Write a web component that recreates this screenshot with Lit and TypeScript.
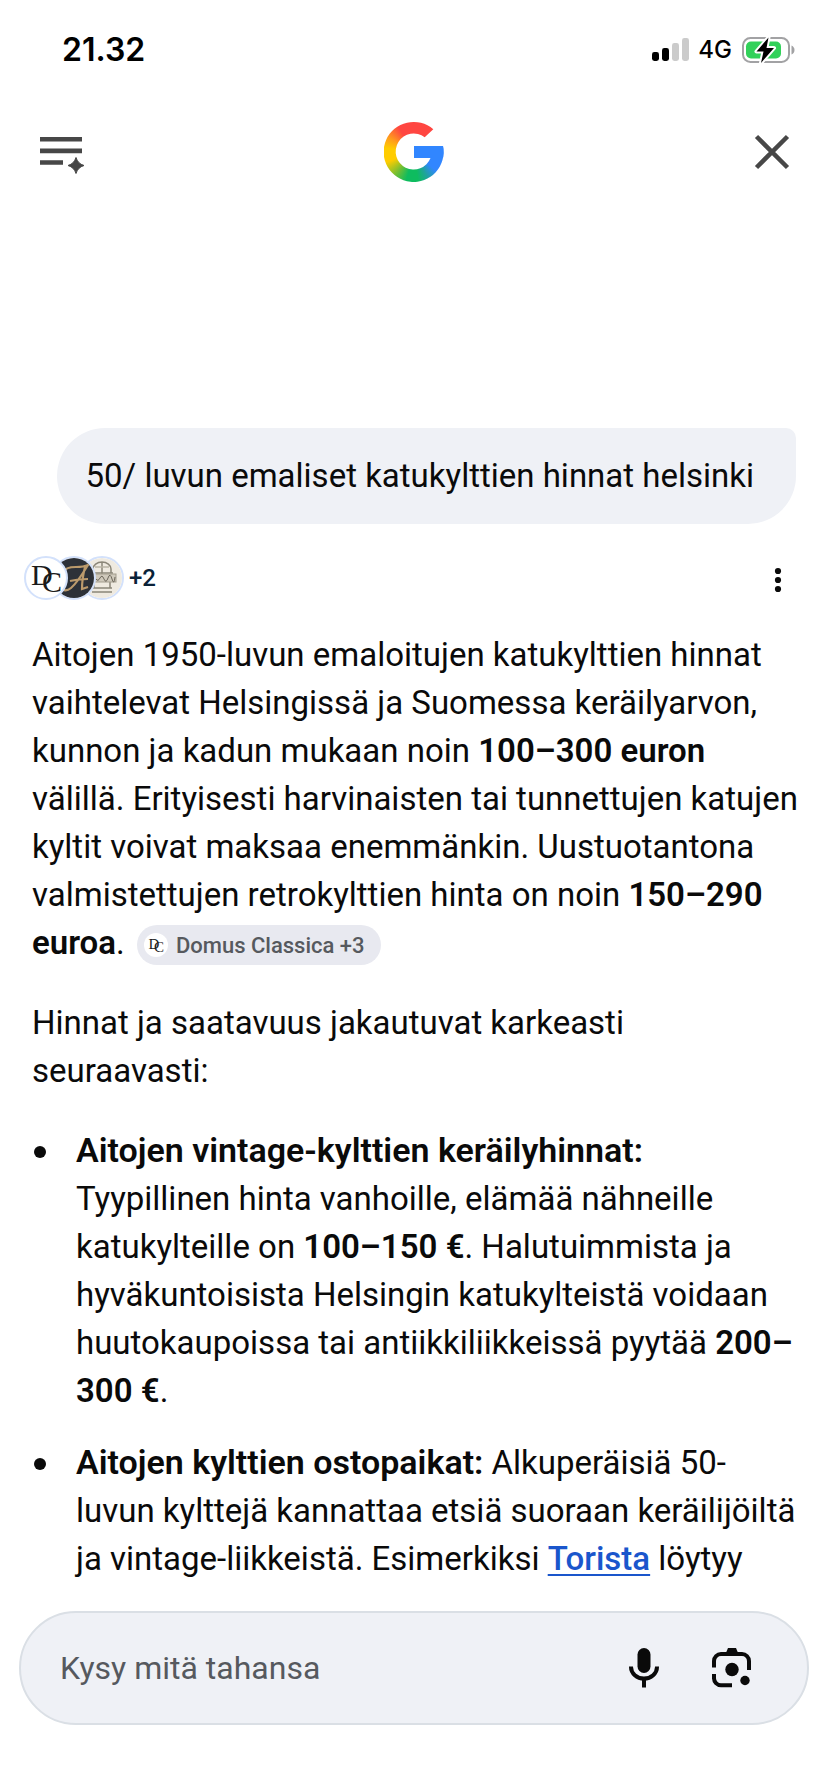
import { LitElement, html, svg, css } from "lit";
import { customElement } from "lit/decorators.js";

const monogram = svg`
  <text x="5" y="27" font-size="30">D</text>
  <text x="16" y="34" font-size="30">C</text>`;

@customElement("status-bar")
class StatusBar extends LitElement {
  static styles = css`
    :host { display: flex; align-items: center; justify-content: space-between; height: 100px; padding: 0 33px 0 62px; font-family: Inter, "Liberation Sans", sans-serif; color: #000; }
    .time { font-size: 32px; font-weight: 600; }
    .right { display: flex; align-items: center; gap: 9px; }
    .net { font-size: 24px; font-weight: 500; }
    svg { display: block; }
  `;
  render() {
    return html`
      <span class="time">21.32</span>
      <span class="right">
        <svg width="37" height="24" viewBox="0 0 37 24" aria-hidden="true">
          <rect x="0" y="14" width="7" height="9" rx="2.4" />
          <rect x="10" y="10" width="7" height="13" rx="2.4" />
          <rect x="20" y="5" width="7" height="18" rx="2.4" fill="#cbcbcb" />
          <rect x="30" y="0" width="7" height="23" rx="2.4" fill="#cbcbcb" />
        </svg>
        <span class="net">4G</span>
        <svg width="54" height="28" viewBox="0 0 54 28" aria-hidden="true">
          <rect x="2" y="2" width="46" height="24" rx="7.5" fill="none" stroke="#a2a2a4" stroke-width="2" />
          <rect x="5" y="5.500" width="35" height="17" rx="5" fill="#32d15a" />
          <path d="M50.500 9.500 Q53.500 11 53.500 14 Q53.500 17 50.500 18.500Z" fill="#a2a2a4" />
          <path d="M27.500 1.500 L15.500 15.500 H22.500 L20 27 L33 12 H25.500Z" stroke="#fff" stroke-width="4" stroke-linejoin="round" />
          <path d="M27.500 1.500 L15.500 15.500 H22.500 L20 27 L33 12 H25.500Z" />
        </svg>
      </span>`;
  }
}

@customElement("app-header")
class AppHeader extends LitElement {
  static styles = css`
    :host { display: grid; grid-template-columns: 1fr auto 1fr; align-items: center; height: 104px; padding: 0 28px; color: #474747; }
    button { display: grid; place-items: center; width: 64px; height: 56px; padding: 0; border: 0; background: none; color: inherit; cursor: pointer; }
    .close { justify-self: end; width: 56px; }
    .logo {
      width: 60px; height: 60px;
      background:
        linear-gradient(#3186ff, #3186ff) 30px 24px / 30px 12px no-repeat,
        conic-gradient(#ff4641 0deg 45deg, #3186ff 70deg 130deg, #1fa39c 152deg, #0ebc5f 172deg 195deg, #6dbe35 218deg, #ffcc00 250deg 278deg, #ff9b1d 300deg, #ff4641 328deg 360deg);
      clip-path: path("M49.300 7.300 A30 30 0 1 0 59 24 L30 24 L30 36 L46.500 36 A18 18 0 1 1 40.700 15.300 Z");
    }
  `;
  render() {
    return html`
      <button aria-label="Keskustelut">
        <svg width="44" height="40" viewBox="0 0 44 40" fill="currentColor" overflow="visible">
          <path d="M2 5h42v4.600H2zM2 16.600h42v4.600H2zM2 28.200h23v4.600H2z" />
          <path d="M38 25.500 Q39.800 31.700 46 33.500 Q39.800 35.300 38 41.500 Q36.200 35.300 30 33.500 Q36.200 31.700 38 25.500Z" stroke="currentColor" />
        </svg>
      </button>
      <div class="logo" role="img" aria-label="Google"></div>
      <button class="close" aria-label="Sulje">
        <svg width="40" height="40" viewBox="0 0 40 40" fill="none" stroke="currentColor" stroke-width="4.500">
          <path d="M4.500 4.500 35.500 35.500M35.500 4.500 4.500 35.500" />
        </svg>
      </button>`;
  }
}

@customElement("source-row")
class SourceRow extends LitElement {
  static styles = css`
    :host { display: flex; align-items: center; justify-content: space-between; height: 44px; padding: 0 24px; }
    button { display: flex; align-items: center; padding: 0; border: 0; background: none; cursor: pointer; color: #0a2238; font: 500 24px Roboto, sans-serif; }
    .more { justify-content: center; width: 52px; height: 44px; color: #0a0a0a; }
    .stack { display: flex; flex-direction: row-reverse; margin-right: 5px; }
    .pic { box-sizing: border-box; width: 44px; height: 44px; border: 2px solid #d3e1fb; border-radius: 50%; overflow: hidden; background: #fff; position: relative; }
    .pic + .pic { margin-right: -16px; }
    .pic svg { display: block; }
  `;
  render() {
    return html`
      <button aria-label="Lähteet, +2">
        <span class="stack">
          <span class="pic">
            <svg width="40" height="40" viewBox="0 0 40 40">
              <rect width="40" height="40" fill="#efeae0" />
              <g fill="none" stroke="#8b8678" stroke-width="1.500">
                <path d="M11 15V11a9 7 0 0 1 18 0v4M20 4v12M9 15h22M12 24v6h16V24M10 30h20M10 34h20" />
                <path d="M13 9h14" stroke="#b9b3a5" />
              </g>
              <rect x="7" y="16" width="27" height="8" fill="#cfc9bb" stroke="#a39d8e" />
              <path d="M10 21q2-3 4 0t4-1 4 1 4-1 4 1 3-2" fill="none" stroke="#6d685c" />
            </svg>
          </span>
          <span class="pic">
            <svg width="40" height="40" viewBox="0 0 40 40">
              <rect width="40" height="40" fill="#2d3138" />
              <path d="M10 14q1-5 12-5 8 0 12-2Q23 25 17 30q-5 4-9 1M31 9q-3 12-3 22l6-2M16 23q8-2 18-2" fill="none" stroke="#bb9a6c" stroke-width="2.200" />
            </svg>
          </span>
          <span class="pic">
            <svg width="40" height="40" viewBox="0 0 40 40" font-family="Liberation Serif, serif" fill="#1a1a1a">${monogram}</svg>
          </span>
        </span>
        +2
      </button>
      <button class="more" aria-label="Lisää">
        <svg width="8" height="32" viewBox="0 0 8 32" fill="currentColor">
          <circle cx="4" cy="9" r="3.100" /><circle cx="4" cy="18" r="3.100" /><circle cx="4" cy="27" r="3.100" />
        </svg>
      </button>`;
  }
}

@customElement("ask-bar")
class AskBar extends LitElement {
  static styles = css`
    :host { display: block; padding: 28px 19px 67px; }
    form { box-sizing: border-box; display: flex; align-items: center; gap: 32px; height: 114px; padding: 0 47px 0 39px; border: 2px solid #dadfe5; border-radius: 57px; background: #eff1f6; }
    input { flex: 1; min-width: 0; padding: 0; border: 0; outline: 0; background: none; color: #0a0a0a; font: 32px Roboto, sans-serif; }
    input::placeholder { color: #56595e; opacity: 1; }
    button { display: grid; place-items: center; width: 56px; height: 56px; padding: 0; border: 0; background: none; color: #0a0a0a; cursor: pointer; }
  `;
  render() {
    return html`
      <form>
        <input type="text" aria-label="Kysy mitä tahansa" placeholder="Kysy mitä tahansa" />
        <button type="button" aria-label="Puhehaku">
          <svg width="30" height="40" viewBox="0 0 30 40" fill="none" stroke="currentColor" stroke-width="4">
            <rect x="8.500" y="0" width="13" height="25" rx="6.500" fill="currentColor" stroke="none" />
            <path d="M2 18.500v.5a13 11.500 0 0 0 26 0v-.5M15 31v8.500" />
          </svg>
        </button>
        <button type="button" aria-label="Kuvahaku">
          <svg width="40" height="40" viewBox="0 0 40 40" fill="none" stroke="currentColor" stroke-width="4">
            <path d="M2 19.500V13a7 7 0 0 1 7-7h21a7 7 0 0 1 7 7v9M2 26v4a7 7 0 0 0 7 7.200h11" />
            <path d="M13.500 6 16 0h8l2.500 6Z" fill="currentColor" stroke="none" />
            <circle cx="20" cy="21.500" r="6.700" fill="currentColor" stroke="none" />
            <circle cx="33" cy="32.500" r="4.700" fill="currentColor" stroke="none" />
          </svg>
        </button>
      </form>`;
  }
}

@customElement("app-root")
class AppRoot extends LitElement {
  static styles = css`
    :host { display: flex; flex-direction: column; min-height: 100vh; background: #fff; color: #0a0a0a; font: 33px/48px Roboto, sans-serif; }
    .query { align-self: flex-end; margin: 224px 32px 32px; padding: 24px 42px 24px 28px; border-radius: 48px 10px 48px 48px; background: #eff1f6; }
    .answer { margin: 31px 24px 0 32px; flex: 1; }
    p { margin: 0 0 32px; }
    b { font-weight: 600; }
    .title { font-size: 34px; line-height: 1; }
    ul { display: grid; gap: 24px; margin: 0; padding: 0; list-style: none; }
    li { display: grid; grid-template-columns: 12px 1fr; gap: 32px; }
    li::before { content: ""; width: 12px; height: 12px; margin: 19px 0 0 2px; border-radius: 50%; background: #0a0a0a; }
    a { color: #1a56cc; font-weight: 500; text-decoration-thickness: 2px; text-underline-offset: 4px; }
    .chip { display: inline-flex; align-items: center; gap: 8px; height: 40px; margin: 0 0 0 4px; padding: 0 16px 0 7px; border: 0; border-radius: 20px; background: #e8e9f0; color: #56595e; font: 500 22px Roboto, sans-serif; vertical-align: middle; cursor: pointer; }
    .fav { width: 24px; height: 24px; border-radius: 50%; background: #fff; }
  `;
  render() {
    return html`
      <status-bar></status-bar>
      <app-header></app-header>
      <div class="query">50/ luvun emaliset katukylttien hinnat helsinki</div>
      <source-row></source-row>
      <main class="answer">
        <p>
          Aitojen 1950-luvun emaloitujen katukylttien hinnat<br />
          vaihtelevat Helsingissä ja Suomessa keräilyarvon,<br />
          kunnon ja kadun mukaan noin <b>100–300 euron</b><br />
          välillä. Erityisesti harvinaisten tai tunnettujen katujen<br />
          kyltit voivat maksaa enemmänkin. Uustuotantona<br />
          valmistettujen retrokylttien hinta on noin <b>150–290<br />
          euroa</b>.
          <button class="chip">
            <svg class="fav" viewBox="-4 -4 48 48" font-family="Liberation Serif, serif" fill="#1a1a1a">${monogram}</svg>
            Domus Classica +3
          </button>
        </p>
        <p>Hinnat ja saatavuus jakautuvat karkeasti<br />seuraavasti:</p>
        <ul>
          <li><div>
            <b class="title">Aitojen vintage-kylttien keräilyhinnat:</b><br />
            Tyypillinen hinta vanhoille, elämää nähneille<br />
            katukylteille on <b>100–150 €</b>. Halutuimmista ja<br />
            hyväkuntoisista Helsingin katukylteistä voidaan<br />
            huutokaupoissa tai antiikkiliikkeissä pyytää <b>200–<br />300 €</b>.
          </div></li>
          <li><div>
            <b class="title">Aitojen kylttien ostopaikat:</b> Alkuperäisiä 50-<br />luvun kylttejä kannattaa etsiä suoraan keräilijöiltä<br />
            ja vintage-liikkeistä. Esimerkiksi <a href="#torista">Torista</a> löytyy
          </div></li>
        </ul>
      </main>
      <ask-bar></ask-bar>`;
  }
}
